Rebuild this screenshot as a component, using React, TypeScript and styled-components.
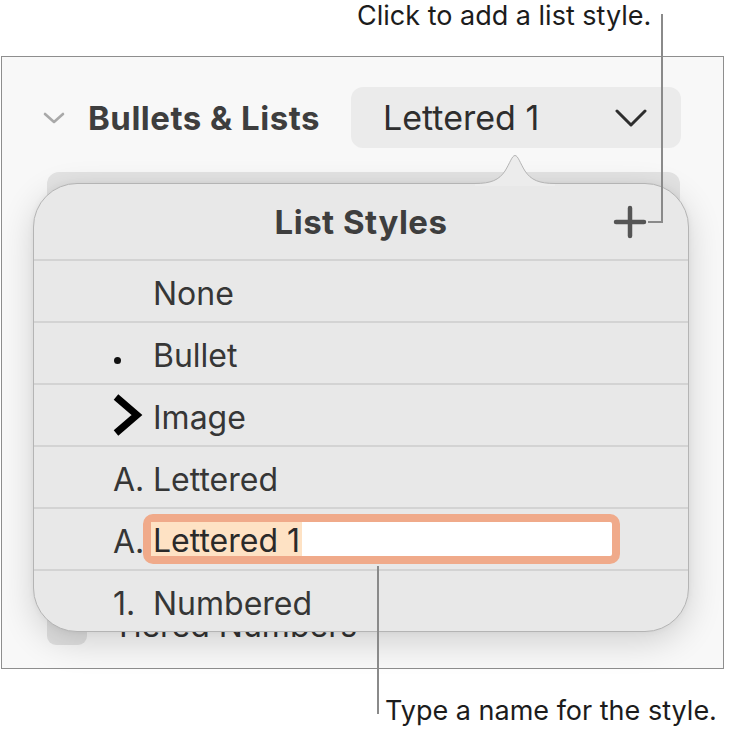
import React from 'react';
import styled, { createGlobalStyle } from 'styled-components';

const GlobalStyle = createGlobalStyle`
  html, body {
    margin: 0;
    padding: 0;
    background: #ffffff;
  }
  body {
    font-family: Inter, "Noto Sans", "Liberation Sans", sans-serif;
    -webkit-font-smoothing: antialiased;
  }
`;

const Page = styled.div`
  position: relative;
  width: 732px;
  height: 732px;
  overflow: hidden;
  background: #ffffff;
`;

const Note = styled.div<{ indent: number; top: number }>`
  padding-left: ${(p) => p.indent}px;
  padding-top: ${(p) => p.top}px;
  font-size: 27px;
  line-height: 30px;
  color: #1c1c1c;
  white-space: nowrap;
`;

const TopNote = styled(Note)`
  height: 56px;
  box-sizing: border-box;
`;

const Leader = styled.div<{ x: number; y: number; w: number; h: number }>`
  position: absolute;
  left: ${(p) => p.x}px;
  top: ${(p) => p.y}px;
  width: ${(p) => p.w}px;
  height: ${(p) => p.h}px;
  background: #8a8a8a;
  z-index: 5;
`;

const Panel = styled.div`
  position: relative;
  margin-left: 1px;
  width: 723px;
  height: 613px;
  box-sizing: border-box;
  border: 1px solid #8e8e8e;
  background: #f8f8f8;
  display: flex;
  flex-direction: column;
`;

const SectionHeader = styled.div`
  display: flex;
  align-items: center;
  padding: 30px 42px 0 41px;
`;

const Disclosure = styled.svg`
  width: 22px;
  height: 14px;
  margin-right: 23px;
  flex-shrink: 0;
`;

const SectionTitle = styled.div`
  font-size: 33px;
  font-weight: 700;
  color: #3e3e3e;
  letter-spacing: 0.5px;
  white-space: nowrap;
`;

const StyleSelect = styled.div`
  margin-left: auto;
  width: 330px;
  height: 61px;
  box-sizing: border-box;
  border-radius: 12px;
  background: #ebebeb;
  display: flex;
  align-items: center;
  justify-content: space-between;
  padding: 0 34px 0 32px;
  font-size: 34px;
  color: #2e2e2e;
`;

const SelectChevron = styled.svg`
  width: 32px;
  height: 18px;
`;

const HiddenBar = styled.div`
  margin: 24px 0 0 45px;
  width: 633px;
  height: 56px;
  border-radius: 12px;
  background: #e3e3e3;
`;

const CheckRow = styled.div`
  margin: auto 0 23px 45px;
  height: 40px;
  display: flex;
  align-items: center;
  gap: 26px;
  font-size: 32px;
  color: #333333;
`;

const CheckBox = styled.div`
  width: 40px;
  height: 40px;
  border-radius: 9px;
  background: #e0e0e0;
`;

const Popover = styled.div`
  position: absolute;
  left: 31px;
  top: 126px;
  width: 656px;
  height: 449px;
  box-sizing: border-box;
  border: 1px solid #b4b4b4;
  border-radius: 44px;
  background: #e8e8e8;
  box-shadow: 0 10px 34px rgba(0, 0, 0, 0.16), 0 0 6px rgba(0, 0, 0, 0.05);
  z-index: 2;
`;

const PopArrow = styled.svg`
  position: absolute;
  left: 441px;
  top: -29px;
  width: 80px;
  height: 31px;
  overflow: visible;
`;

const PopHeader = styled.div`
  height: 75px;
  display: grid;
  grid-template-columns: 1fr auto 1fr;
  align-items: center;
`;

const PopTitle = styled.div`
  grid-column: 2;
  font-size: 33px;
  font-weight: 700;
  color: #3e3e3e;
  letter-spacing: 0.5px;
  white-space: nowrap;
`;

const AddButton = styled.svg`
  grid-column: 3;
  justify-self: end;
  margin-right: 41px;
  width: 34px;
  height: 34px;
`;

const StyleRow = styled.div`
  height: 62px;
  box-sizing: border-box;
  border-top: 2px solid #d3d3d3;
  display: flex;
  align-items: center;
  padding: 4px 0 0 79px;
  font-size: 32px;
  color: #363636;
`;

const Marker = styled.div`
  width: 40px;
  flex-shrink: 0;
  display: flex;
  align-items: center;
`;

const Dot = styled.span`
  width: 7px;
  height: 7px;
  margin: 10px 0 0 1px;
  border-radius: 50%;
  background: #111111;
`;

const NameField = styled.div`
  margin: -4px 0 0 -10px;
  width: 477px;
  height: 50px;
  box-sizing: border-box;
  border: 8px solid #f0aa8a;
  border-radius: 10px;
  background: #ffffff;
  display: flex;
  align-items: stretch;
  font-size: 32px;
  color: #2a2a2a;
`;

const Selection = styled.span`
  background: #fee2c4;
  padding: 3px 2px 0;
  display: flex;
  align-items: center;
`;

type ListStyle = { name: string; marker?: React.ReactNode; editing?: boolean };

const styles: ListStyle[] = [
  { name: 'None' },
  { name: 'Bullet', marker: <Dot /> },
  {
    name: 'Image',
    marker: (
      <svg width="30" height="44" viewBox="0 0 30 44" style={{ marginTop: -4 }}>
        <polyline points="3,4 24,22 3,40" fill="none" stroke="#000" strokeWidth="7" />
      </svg>
    ),
  },
  { name: 'Lettered', marker: 'A.' },
  { name: 'Lettered 1', marker: 'A.', editing: true },
  { name: 'Numbered', marker: '1.' },
];

export default function App() {
  return (
    <Page>
      <GlobalStyle />
      <TopNote indent={357} top={1}>Click to add a list style.</TopNote>
      <Panel>
        <SectionHeader>
          <Disclosure viewBox="0 0 22 14">
            <polyline points="2,3 11,11 20,3" fill="none" stroke="#a9a9a9" strokeWidth="2.6" strokeLinecap="round" strokeLinejoin="round" />
          </Disclosure>
          <SectionTitle>Bullets &amp; Lists</SectionTitle>
          <StyleSelect>
            <span>Lettered 1</span>
            <SelectChevron viewBox="0 0 32 18">
              <polyline points="2,2 16,16 30,2" fill="none" stroke="#2e2e2e" strokeWidth="3" strokeLinecap="round" strokeLinejoin="round" />
            </SelectChevron>
          </StyleSelect>
        </SectionHeader>
        <HiddenBar />
        <CheckRow>
          <CheckBox />
          <span>Tiered Numbers</span>
        </CheckRow>

        <Popover>
          <PopArrow viewBox="0 0 80 31">
            <path d="M0,28.5 C16,28.5 24,25 30,16 C35,8 37,0.5 40,0.5 C43,0.5 45,8 50,16 C56,25 64,28.5 80,28.5 L80,31 L0,31 Z" fill="#ececec" />
            <path d="M0,28.5 C16,28.5 24,25 30,16 C35,8 37,0.5 40,0.5 C43,0.5 45,8 50,16 C56,25 64,28.5 80,28.5" fill="none" stroke="#b4b4b4" strokeWidth="1" />
          </PopArrow>
          <PopHeader>
            <PopTitle>List Styles</PopTitle>
            <AddButton viewBox="0 0 34 34">
              <path d="M17 3 V31 M3 17 H31" stroke="#555" strokeWidth="4.5" strokeLinecap="round" />
            </AddButton>
          </PopHeader>
          {styles.map((s) => (
            <StyleRow key={s.name}>
              <Marker>{s.marker}</Marker>
              {s.editing ? (
                <NameField>
                  <Selection>{s.name}</Selection>
                </NameField>
              ) : (
                <span>{s.name}</span>
              )}
            </StyleRow>
          ))}
        </Popover>
      </Panel>
      <Note indent={385} top={27}>Type a name for the style.</Note>

      <Leader x={661} y={14} w={2} h={209} />
      <Leader x={648} y={221} w={15} h={2} />
      <Leader x={377} y={566} w={2} h={148} />
    </Page>
  );
}
